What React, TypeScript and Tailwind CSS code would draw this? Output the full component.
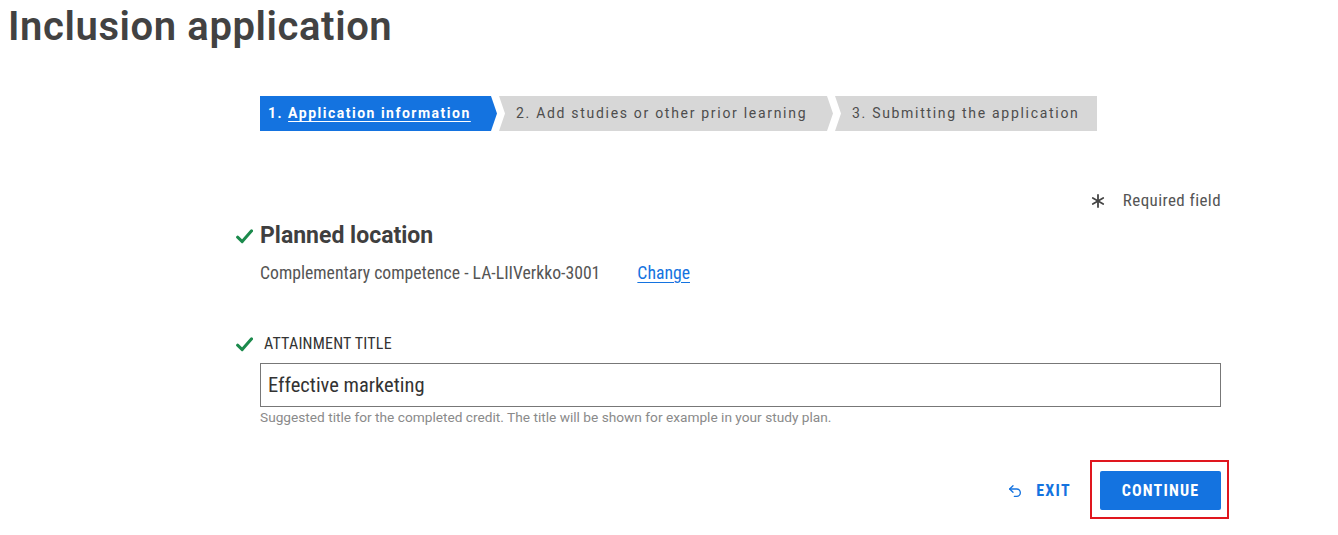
import { Undo2 } from "lucide-react";

const font = { fontFamily: '"Roboto Condensed", Roboto, "Liberation Sans", sans-serif' };
const wide = { fontFamily: 'Roboto, "Liberation Sans", sans-serif' };

function Check() {
  return (
    <svg width="17" height="15" viewBox="0 0 17 15" className="shrink-0">
      <path d="M1.6 8.2 L6.2 12.6 L15.6 1.8" fill="none" stroke="#1b8a4c" strokeWidth="3" strokeLinecap="round" strokeLinejoin="round" />
    </svg>
  );
}

function Asterisk() {
  return (
    <svg width="14" height="14" viewBox="0 0 14 14" className="shrink-0">
      <g stroke="#444" strokeWidth="1.8" strokeLinecap="round">
        <line x1="7" y1="1" x2="7" y2="13" />
        <line x1="1.8" y1="4" x2="12.2" y2="10" />
        <line x1="1.8" y1="10" x2="12.2" y2="4" />
      </g>
    </svg>
  );
}

function Stepper() {
  return (
    <div className="flex h-[35px] gap-[2px] text-[14px] tracking-[1.7px]" style={wide}>
      <div className="flex w-[237px] items-center bg-[#1473e0] pl-[8px] font-bold tracking-[1.5px] text-white [clip-path:polygon(0_0,calc(100%_-_6px)_0,100%_50%,calc(100%_-_6px)_100%,0_100%)]">
        <span>1.&nbsp;</span>
        <span className="underline underline-offset-[3px]">Application information</span>
      </div>
      <div className="flex w-[334px] items-center bg-[#d7d7d7] pl-[17px] text-[#4d4d4d] [clip-path:polygon(0_0,calc(100%_-_6px)_0,100%_50%,calc(100%_-_6px)_100%,0_100%,6px_50%)]">
        2. Add studies or other prior learning
      </div>
      <div className="flex w-[262px] items-center bg-[#d7d7d7] pl-[17px] text-[#4d4d4d] [clip-path:polygon(0_0,100%_0,100%_100%,0_100%,6px_50%)]">
        3. Submitting the application
      </div>
    </div>
  );
}

export default function App() {
  return (
    <div className="min-h-[535px] bg-white text-[#444]" style={font}>
      <h1 className="pl-[8px] pt-[3px] text-[40px] font-semibold leading-[48px] tracking-[0.6px] text-[#424242]" style={wide}>
        Inclusion application
      </h1>

      <div className="ml-[260px] w-[961px]">
        <div className="mt-[45px]">
          <Stepper />
        </div>

        <div className="mt-[60px] flex h-[20px] items-center justify-end gap-[18px] text-[17px] tracking-[0.4px] text-[#555]">
          <Asterisk />
          <span>Required field</span>
        </div>

        <div className="-ml-[24px] mt-[10px] flex h-[30px] items-center gap-[7px]">
          <Check />
          <h2 className="text-[23px] font-bold text-[#3f3f3f]" style={wide}>
            Planned location
          </h2>
        </div>

        <div className="mt-[11px] flex h-[22px] items-center text-[17.7px] text-[#555]">
          <span>Complementary competence - LA-LIIVerkko-3001</span>
          <a href="#" className="ml-[37px] text-[#1473e0] underline underline-offset-[3px]">
            Change
          </a>
        </div>

        <div className="-ml-[24px] mt-[50px] flex h-[20px] items-center gap-[11px]">
          <Check />
          <label className="text-[16px] uppercase tracking-[0.2px] text-[#333]">Attainment title</label>
        </div>

        <div className="mt-[9px] flex h-[44px] items-center border border-[#777] pl-[7px] text-[20.5px] text-[#333]">
          Effective marketing
        </div>

        <p className="mt-[1px] text-[13.7px] leading-[18px] text-[#8a8a8a]" style={wide}>
          Suggested title for the completed credit. The title will be shown for example in your study plan.
        </p>

        <div className="mt-[45px] flex items-center justify-end">
          <button className="flex items-center gap-[13px] text-[16px] font-bold tracking-[1.3px] text-[#1473e0]">
            <Undo2 size={16} strokeWidth={2} />
            EXIT
          </button>
          <div className="relative ml-[29px]">
            <button className="flex h-[39px] w-[121px] items-center justify-center rounded-[2px] bg-[#1473e0] text-[16px] font-bold tracking-[1.2px] text-white">
              CONTINUE
            </button>
            <div className="pointer-events-none absolute -bottom-[9px] -left-[10px] -right-[8px] -top-[11px] border-2 border-[#e0161e]" />
          </div>
        </div>
      </div>
    </div>
  );
}
